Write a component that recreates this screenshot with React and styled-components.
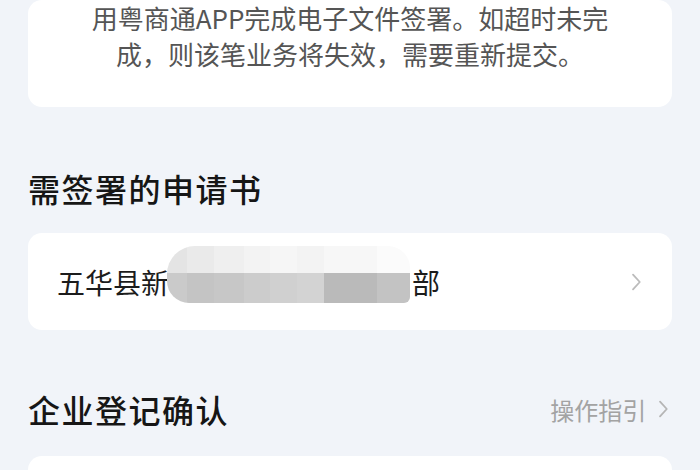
import styled, { createGlobalStyle } from "styled-components";

const Global = createGlobalStyle`
  html, body {
    margin: 0;
    padding: 0;
    background: #f1f4f9;
  }
  body {
    font-family: "Noto Sans CJK SC", "Noto Sans", sans-serif;
    -webkit-font-smoothing: antialiased;
  }
`;

const Page = styled.div`
  width: 700px;
  height: 470px;
  overflow: hidden;
  padding: 0 28px;
  box-sizing: border-box;
`;

const Card = styled.div`
  background: #fff;
  border-radius: 14px;
`;

const NoticeCard = styled(Card)`
  padding: 0 0 35px;
  text-align: center;
  color: #555;
  font-size: 26px;
  line-height: 36px;
`;

const SectionHead = styled.div`
  display: flex;
  align-items: center;
  justify-content: space-between;
  height: 40px;
  margin-top: ${(p) => p.$top}px;
  margin-bottom: ${(p) => p.$bottom}px;
`;

const Title = styled.h2`
  margin: 0;
  font-size: 32px;
  font-weight: 500;
  color: #161616;
  letter-spacing: 1.5px;
`;

const Guide = styled.span`
  display: flex;
  align-items: center;
  gap: 12px;
  font-size: 24px;
  color: #a3a3a3;
  margin-right: 3px;
`;

const Row = styled(Card)`
  height: 97px;
  display: flex;
  align-items: center;
  padding: 0 30px 0 29px;
  box-sizing: border-box;
`;

const RowText = styled.span`
  flex: 1;
  display: flex;
  align-items: center;
  font-size: 28px;
  color: #1c1c1c;
`;

const Mosaic = styled.span`
  display: grid;
  grid-template-columns: 20px 27px 30px 26px 27px 27px 53px 33px;
  grid-template-rows: 27px 30px;
  width: 243px;
  height: 57px;
  margin: 0 2px 14px -2px;
  border-radius: 28px 22px 6px 22px;
  overflow: hidden;
  filter: blur(0.6px);
`;

const Cell = styled.span`
  background: ${(p) => p.$c};
`;

const Chevron = ({ color = "#bbb", size = 16 }) => (
  <svg width={size * 0.6} height={size} viewBox="0 0 9 16" fill="none">
    <path d="M1.5 1.5 L7.5 8 L1.5 14.5" stroke={color} strokeWidth="1.6" strokeLinecap="round" strokeLinejoin="round" />
  </svg>
);

const top = ["#e4e4e4", "#eaeaea", "#efefef", "#f3f3f3", "#f6f6f6", "#f3f3f3", "#f7f7f7", "#fbfbfb"];
const bottom = ["#cacaca", "#c4c4c4", "#c7c7c7", "#cccccc", "#d0d0d0", "#d3d3d3", "#bababa", "#c3c3c3"];

export default function App() {
  return (
    <>
      <Global />
      <Page>
        <NoticeCard>
          <div>用粤商通APP完成电子文件签署。如超时未完</div>
          <div>成，则该笔业务将失效，需要重新提交。</div>
        </NoticeCard>

        <SectionHead $top={61} $bottom={25}>
          <Title>需签署的申请书</Title>
        </SectionHead>
        <Row>
          <RowText>
            五华县新
            <Mosaic>
              {top.map((c, i) => (
                <Cell key={"t" + i} $c={c} />
              ))}
              {bottom.map((c, i) => (
                <Cell key={"b" + i} $c={c} />
              ))}
            </Mosaic>
            部
          </RowText>
          <Chevron size={18} />
        </Row>

        <SectionHead $top={59} $bottom={27}>
          <Title>企业登记确认</Title>
          <Guide>
            操作指引
            <Chevron color="#b5b5b5" size={18} />
          </Guide>
        </SectionHead>
        <Row />
      </Page>
    </>
  );
}
